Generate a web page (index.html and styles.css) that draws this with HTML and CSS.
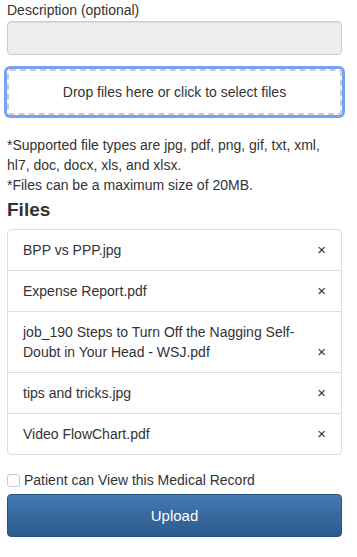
FILE: index.html
```html
<!DOCTYPE html>
<html lang="en">
<head>
    <meta charset="UTF-8">
    <meta name="viewport" content="width=device-width, initial-scale=1.0">
    <title>Upload Files</title>
    <link rel="stylesheet" href="styles.css">
</head>
<body>
    <form class="uploadForm">
        <label class="fieldLabel" for="descInput">Description (optional)</label>
        <input type="text" id="descInput" class="descInput" readonly>

        <div class="dropZone">Drop files here or click to select files</div>

        <p class="fileNote">*Supported file types are jpg, pdf, png, gif, txt, xml, hl7, doc, docx, xls, and xlsx.<br>*Files can be a maximum size of 20MB.</p>

        <h4 class="filesTitle">Files</h4>
        <ul class="fileList">
            <li class="fileItem"><span>BPP vs PPP.jpg</span><button type="button" class="removeBtn">&times;</button></li>
            <li class="fileItem"><span>Expense Report.pdf</span><button type="button" class="removeBtn">&times;</button></li>
            <li class="fileItem"><span>job_190 Steps to Turn Off the Nagging Self-Doubt in Your Head - WSJ.pdf</span><button type="button" class="removeBtn">&times;</button></li>
            <li class="fileItem"><span>tips and tricks.jpg</span><button type="button" class="removeBtn">&times;</button></li>
            <li class="fileItem"><span>Video FlowChart.pdf</span><button type="button" class="removeBtn">&times;</button></li>
        </ul>

        <label class="checkRow"><input type="checkbox" class="checkBox"> Patient can View this Medical Record</label>

        <button type="button" class="uploadBtn">Upload</button>
    </form>
</body>
</html>
```

FILE: styles.css
```css
body {
    font-family: "Liberation Sans", Arial, sans-serif;
    font-size: 14px;
    line-height: 20px;
    color: #333;
    margin: 0;
    padding: 0 15px 0 7px;
    background-color: white;
}

.uploadForm {
    display: flex;
    flex-direction: column;
}

.fieldLabel {
    display: block;
    height: 20px;
}

.descInput {
    margin-top: 1px;
    height: 34px;
    box-sizing: border-box;
    border: 1px solid #ccc;
    border-radius: 4px;
    background-color: #eee;
    box-shadow: inset 0 1px 1px rgba(0, 0, 0, 0.075);
    padding: 6px 12px;
    font: inherit;
}

.dropZone {
    margin-top: 14px;
    height: 46px;
    box-sizing: border-box;
    border: 2px dashed #ccc;
    border-radius: 3px;
    box-shadow: 0 0 0 3px #76a2f5;
    display: flex;
    align-items: center;
    justify-content: center;
}

.fileNote {
    margin: 20px 0 0;
}

.filesTitle {
    margin: 5px 0 9px;
    font-size: 19px;
    line-height: 20px;
    font-weight: bold;
}

.fileList {
    list-style: none;
    margin: 0;
    padding: 0;
    border: 1px solid #ddd;
    border-radius: 4px;
}

.fileItem {
    display: flex;
    justify-content: space-between;
    align-items: flex-end;
    padding: 10px 15px;
    border-top: 1px solid #ddd;
}

.fileItem:first-child {
    border-top: none;
}

.removeBtn {
    background: none;
    border: none;
    padding: 0;
    margin-left: 12px;
    font: inherit;
    font-size: 15px;
    line-height: 20px;
    color: #333;
    cursor: pointer;
}

.checkRow {
    margin-top: 15px;
    display: flex;
    align-items: center;
    gap: 4px;
    height: 20px;
}

.checkBox {
    appearance: none;
    margin: 0;
    width: 13px;
    height: 13px;
    border: 1px solid #ccc;
    border-radius: 3px;
    background: white;
}

.uploadBtn {
    margin-top: 4px;
    height: 43px;
    border: 1px solid #245580;
    border-radius: 4px;
    background-image: linear-gradient(to bottom, #4479b3 0%, #2c5a8c 100%);
    color: white;
    font: inherit;
    font-size: 15px;
    cursor: pointer;
}
```
